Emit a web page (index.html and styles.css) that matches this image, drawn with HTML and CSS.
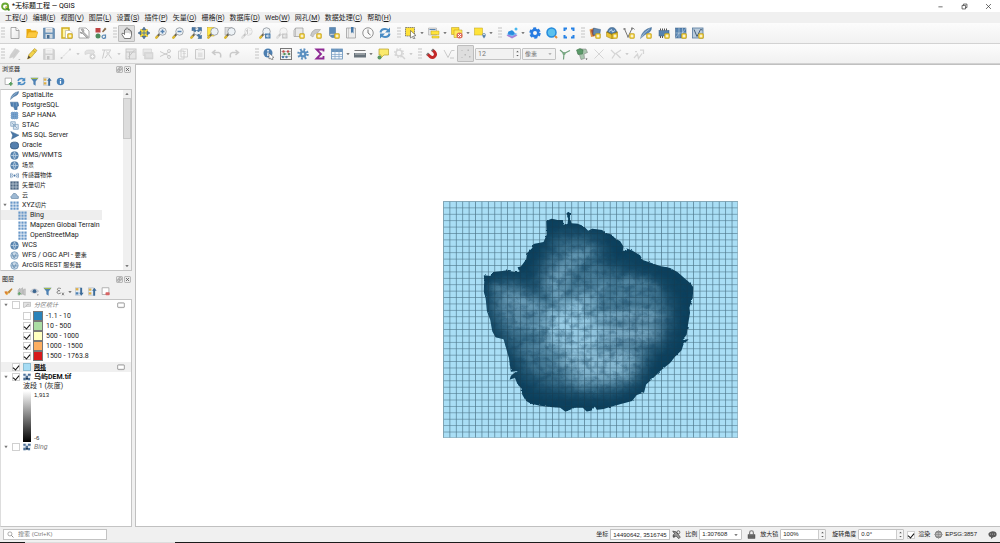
FILE: index.html
```html
<!DOCTYPE html>
<html lang="zh-CN">
<head>
<meta charset="utf-8">
<title>*无标题工程 — QGIS</title>
<link rel="stylesheet" href="styles.css">
</head>
<body>
<svg class="sprite" aria-hidden="true">
  <defs>
    <linearGradient id="pg" x1="0" y1="0" x2="1" y2="1"><stop offset="0" stop-color="#fff"/><stop offset="1" stop-color="#e8e8e8"/></linearGradient>
    <symbol id="plus" viewBox="0 0 24 24"><rect x="13" y="13" width="10" height="10" rx="2" fill="#e8c52c" stroke="#b8941a"/><path d="M18 15v6M15 18h6" stroke="#fff" stroke-width="2"/></symbol>
    <symbol id="new" viewBox="0 0 24 24"><path d="M4 1h10l6 6v16H4z" fill="url(#pg)" stroke="#888" stroke-width="1.4"/><path d="M14 1v6h6" fill="#fff" stroke="#888" stroke-width="1.4"/></symbol>
    <symbol id="open" viewBox="0 0 24 24"><path d="M1 21V4h8l2 3h10v14z" fill="#e9a90c"/><path d="M1 21l4-11h19l-4 11z" fill="#fcc93e" stroke="#dc9f10"/></symbol>
    <symbol id="save" viewBox="0 0 24 24"><path d="M1 2h20l2 2v19H1z" fill="#6b93b8" stroke="#476f98"/><rect x="5" y="2" width="14" height="9" fill="#eee"/><path d="M7 5h10M7 8h10" stroke="#aaa"/><rect x="5" y="14" width="14" height="9" fill="#cfd8df"/><rect x="8" y="16" width="5" height="7" fill="#486d92"/></symbol>
    <symbol id="layout" viewBox="0 0 24 24"><path d="M2 2h14v20H2z" fill="#fff4a5" stroke="#d0ad1f" stroke-width="3"/><path d="M9 7h9l4 4v12H9z" fill="#fff" stroke="#999"/><use href="#plus"/></symbol>
    <symbol id="layman" viewBox="0 0 24 24"><path d="M2 2h14l6 6v14H2z" fill="#fff" stroke="#888" stroke-width="1.4"/><path d="M6 5q3-2 5 0t0 5l9 9-2 3-9-9q-4 1-5-3l3 1 2-2z" fill="#bbb" stroke="#777"/></symbol>
    <symbol id="style" viewBox="0 0 24 24"><rect x="1" y="2" width="10" height="9" fill="#c04444"/><path d="M14 9l6-8 3 3-7 7z" fill="#8b6d4a"/><circle cx="6" cy="18" r="5" fill="#4c8a5b"/><path d="M21 15v8M21 20q-1 3-4 3-3-1-3-4 1-3 4-3l3 1" fill="none" stroke="#5c8ab5" stroke-width="2.4"/></symbol>
    <symbol id="hand" viewBox="0 0 24 24"><path d="M7 23l-5-8q-1-4 3-2l2 2V6q2-3 3 0V3q2-3 4 0v2q3-2 4 1v2q3-1 3 1v8l-2 6z" fill="#fff" stroke="#444" stroke-width="1.4"/><path d="M10 6v6M14 5v7M18 7v6" stroke="#555"/></symbol>
    <symbol id="pansel" viewBox="0 0 24 24"><path d="M5 5h14v14H5z" fill="#ffe033" stroke="#c5a111"/><path d="M12 0l4 6H8zM12 24l4-6H8zM0 12l6-4v8zM24 12l-6-4v8z" fill="#557ca3" stroke="#385a7c"/><path d="M12 7v10M7 12h10" stroke="#577da2" stroke-width="2"/></symbol>
    <symbol id="lens" viewBox="0 0 24 24"><path d="M9 14L2 22" stroke="#6c6553" stroke-width="4"/><path d="M6 18l-5 5" stroke="#e2bc2f" stroke-width="4"/><circle cx="15" cy="9" r="7.5" fill="#edf2f6" stroke="#92989e" stroke-width="1.7"/></symbol>
    <symbol id="zin" viewBox="0 0 24 24"><use href="#lens"/><path d="M15 5v8M11 9h8" stroke="#5682b1" stroke-width="3"/></symbol>
    <symbol id="zout" viewBox="0 0 24 24"><use href="#lens"/><path d="M11 9h8" stroke="#5682b1" stroke-width="3"/></symbol>
    <symbol id="zfull" viewBox="0 0 24 24"><use href="#lens"/><path d="M4 8V1h7L9 4l4 3-3 3-4-4zM23 8V1h-7l2 3-4 3 3 3 4-4zM23 16v7h-7l2-3-4-3 3-3 4 4z" fill="#4678a8" stroke="#365f87"/></symbol>
    <symbol id="zsel" viewBox="0 0 24 24"><rect x="1" y="1" width="13" height="17" fill="#ffe642" stroke="#cba60d"/><use href="#lens"/></symbol>
    <symbol id="zlay" viewBox="0 0 24 24"><rect x="2" y="1" width="14" height="15" fill="#ddd" stroke="#999"/><use href="#lens"/></symbol>
    <symbol id="znat" viewBox="0 0 24 24"><use href="#lens"/><path d="M11 7l2-2v9M18 7v1m0 4v1" stroke="#777" stroke-width="2"/></symbol>
    <symbol id="zlast" viewBox="0 0 24 24"><use href="#lens"/><rect x="12" y="13" width="11" height="10" fill="#4c7fad"/><path d="M21 18h-6m3-3l-3 3 3 3" fill="none" stroke="#fff" stroke-width="1.7"/></symbol>
    <symbol id="map3d" viewBox="0 0 24 24"><path d="M5 2h15v17H2V7l3-5z" fill="#e9e9e9" stroke="#999" stroke-width="1.4"/><path d="M5 2v17" stroke="#999"/><use href="#plus"/></symbol>
    <symbol id="map3" viewBox="0 0 24 24"><path d="M1 17q2-9 9-12h11l-6 7q-8 0-9 8z" fill="#c9c9c9" stroke="#999"/><use href="#plus"/></symbol>
    <symbol id="bookadd" viewBox="0 0 24 24"><path d="M3 1h12v20H8l-5-4z" fill="#5d8cb8" stroke="#466f96"/><path d="M3 17l2-3h10" fill="#ddd" stroke="#bbb"/><use href="#plus"/></symbol>
    <symbol id="book" viewBox="0 0 24 24"><path d="M3 2h18v20H3z" fill="#ececec" stroke="#999" stroke-width="1.5"/><path d="M7 2v20" stroke="#aaa"/><path d="M12 0h5v13l-3-3-2 3z" fill="#4678a8"/></symbol>
    <symbol id="clock" viewBox="0 0 24 24"><circle cx="12" cy="12" r="10.5" fill="#fafafa" stroke="#888" stroke-width="1.8"/><path d="M12 5v7l5 4" fill="none" stroke="#666" stroke-width="1.8"/></symbol>
    <symbol id="refresh" viewBox="0 0 24 24"><path d="M3 11q1-7 9-7 4 0 7 3M21 13q-1 7-9 7-4 0-7-3" fill="none" stroke="#4a8cc4" stroke-width="4"/><path d="M22 1v10H12zM2 23V13h10z" fill="#4a8cc4"/></symbol>
    <symbol id="selrect" viewBox="0 0 24 24"><rect x="1" y="1" width="18" height="17" fill="#ffe138" stroke="#666" stroke-width="1.5" stroke-dasharray="3 1"/><path d="M11 7l11 10-5 1 3 5-3 1-2-5-4 3z" fill="#fff" stroke="#333"/></symbol>
    <symbol id="selval" viewBox="0 0 24 24"><path d="M1 2h16v14H1z" fill="#e5e5e5" stroke="#999"/><path d="M3 5h12" stroke="#5682b1" stroke-width="2"/><path d="M6 8h16v7H6z" fill="#ffe43b" stroke="#bda11b"/><path d="M8 18h14v4H8z" fill="#ffe43b" stroke="#bda11b"/></symbol>
    <symbol id="desel" viewBox="0 0 24 24"><path d="M1 1h15v14H1z" fill="#ffdf35" stroke="#b49612"/><path d="M6 6h16v15H6z" fill="#ffe95f" stroke="#b49612"/><circle cx="17" cy="17" r="6" fill="#dd6a5f"/><path d="M14 14l6 6m0-6l-6 6" stroke="#fff" stroke-width="2"/></symbol>
    <symbol id="selloc" viewBox="0 0 24 24"><rect x="1" y="2" width="16" height="14" fill="#ffe339" stroke="#bca01b"/><path d="M20 23q-7-9 0-11 7 2 0 11" fill="#557fa9"/><circle cx="20" cy="15" r="1.600" fill="#fff"/></symbol>
    <symbol id="cloudlay" viewBox="0 0 24 24"><path d="M1 14l11-5 11 5-11 6z" fill="#77bcf2"/><path d="M1 17l11 6 11-6-4-2-7 4-7-4z" fill="#a583d8"/><path d="M5 15q-3-7 3-7 5-4 8 2 3 4-2 6z" fill="#278cdf"/><circle cx="20" cy="4" r="3" fill="#4ab8ef"/></symbol>
    <symbol id="bgear" viewBox="0 0 24 24"><circle cx="12" cy="12" r="6.5" fill="none" stroke="#277ce2" stroke-width="5"/><circle cx="12" cy="12" r="9.500" fill="none" stroke="#277ce2" stroke-width="4" stroke-dasharray="6 3.95"/></symbol>
    <symbol id="bsearch" viewBox="0 0 24 24"><circle cx="11" cy="11" r="9" fill="#5dc1ed" stroke="#258bdc" stroke-width="3"/><path d="M18 18l4 4" stroke="#e08a3c" stroke-width="4"/></symbol>
    <symbol id="bframe" viewBox="0 0 24 24"><path d="M3 8V3h5M16 3h5v5M21 16v5h-5M8 21H3v-5" fill="none" stroke="#2581e5" stroke-width="4"/></symbol>
    <symbol id="dsm" viewBox="0 0 24 24"><path d="M1 5l9-3 3 16-9 2z" fill="#e0923f"/><path d="M4 7l8-5 4 10-8 7z" fill="#9b4b3c"/><path d="M9 2l14 3-2 14-13-4z" fill="#6288ae" stroke="#3c5f84"/><use href="#plus"/></symbol>
    <symbol id="gpkg" viewBox="0 0 24 24"><path d="M1 10l11-6 11 6v9l-11 5-11-5z" fill="#e8c12f" stroke="#9c7d16"/><path d="M3 10q1-9 9-9t9 9l-9 4z" fill="#5480ad" stroke="#33567a"/><path d="M6 9l5-4 2 5 5-3" stroke="#c9dceb" fill="none" stroke-width="2"/><path d="M1 10l11 5 11-5M12 15v9" fill="none" stroke="#8b6d10" stroke-width="1.500"/><use href="#plus"/></symbol>
    <symbol id="vnew" viewBox="0 0 24 24"><path d="M3 4l7 16 8-17q4-1 5 2" fill="none" stroke="#666" stroke-width="1.8"/><g fill="#888"><rect x="1" y="2" width="4" height="4"/><rect x="8" y="17" width="4" height="4"/><rect x="16" y="1" width="4" height="4"/></g><use href="#plus"/></symbol>
    <symbol id="feather" viewBox="0 0 24 24"><path d="M1 23Q4 5 23 1q0 10-13 14z" fill="#5986b4" stroke="#3b6189"/><path d="M1 23Q7 11 19 4" stroke="#e5eef6" fill="none"/></symbol>
    <symbol id="feathernew" viewBox="0 0 24 24"><use href="#feather"/><use href="#plus"/></symbol>
    <symbol id="mem" viewBox="0 0 24 24"><rect x="2" y="7" width="20" height="11" fill="#5682ae" stroke="#365b82"/><path d="M5 3v4M9 3v4M13 3v4M17 3v4M5 18v4M9 18v4" stroke="#555" stroke-width="2"/><use href="#plus"/></symbol>
    <symbol id="mesh" viewBox="0 0 24 24"><rect x="1" y="2" width="21" height="20" fill="#5482b0" stroke="#365b82"/><path d="M1 12h21M8 2v20M15 2v20M8 12L1 22M15 12L22 2" stroke="#d4e0eb" fill="none"/><use href="#plus"/></symbol>
    <symbol id="vtile" viewBox="0 0 24 24"><rect x="1" y="2" width="21" height="20" fill="#b9cbdb" stroke="#55799e" stroke-width="1.6"/><path d="M4 5l6 14 7-14 4 1" fill="none" stroke="#425c76" stroke-width="2"/><use href="#plus"/></symbol>
    <symbol id="pencil" viewBox="0 0 24 24"><path d="M3 22l3-9L17 1l5 4L10 19z" fill="#f3d34b" stroke="#9d8018"/><path d="M3 22l2-7 4 4z" fill="#554936"/><path d="M14 5l5 4" stroke="#9d8018"/></symbol>
    <symbol id="pencils" viewBox="0 0 24 24"><path d="M1 20l2-6L12 1l5 3L8 18zM8 21l2-6L17 3l4 3-10 13z" fill="#888" stroke="#777"/><path d="M18 22h5l-2 2z" fill="#333"/></symbol>
    <symbol id="line" viewBox="0 0 24 24"><path d="M3 20L20 3" stroke="#777" stroke-width="1.6" stroke-dasharray="4 2"/><circle cx="3" cy="20" r="2" fill="#777"/><circle cx="20" cy="3" r="2" fill="#777"/></symbol>
    <symbol id="poly" viewBox="0 0 24 24"><path d="M2 13q-2-9 7-9h10q5 6-2 9l-8-2z" fill="#bbb" stroke="#777"/><circle cx="17" cy="17" r="6" fill="#999"/><path d="M14 17h6M17 14v6" stroke="#fff" stroke-width="2"/></symbol>
    <symbol id="vertex" viewBox="0 0 24 24"><path d="M2 4h18M7 4L3 21M19 5L8 20M11 7l10 14" stroke="#777" fill="none" stroke-width="2"/><circle cx="14" cy="11" r="3" fill="#aaa"/></symbol>
    <symbol id="form" viewBox="0 0 24 24"><rect x="2" y="2" width="20" height="20" fill="#ccc" stroke="#777" stroke-width="2"/><path d="M2 8h19M9 8v14M7 18L19 4" stroke="#666" stroke-width="2"/></symbol>
    <symbol id="trash" viewBox="0 0 24 24"><path d="M2 2h17v13H2z" fill="#ccc" stroke="#777"/><path d="M5 9h17v13H5z" fill="#c99" stroke="#a77"/><path d="M10 12v7m4-7v7m4-7v7" stroke="#fff"/></symbol>
    <symbol id="cut" viewBox="0 0 24 24"><path d="M2 7l19 9M2 17l19-9" stroke="#777" stroke-width="2"/><circle cx="20" cy="6" r="3" fill="none" stroke="#777" stroke-width="2"/><circle cx="20" cy="18" r="3" fill="none" stroke="#777" stroke-width="2"/></symbol>
    <symbol id="copy" viewBox="0 0 24 24"><path d="M3 6h11v16H3zM8 2h13v16H8z" fill="#f5f5f5" stroke="#777" stroke-width="1.6"/><path d="M11 7h7M11 11h7" stroke="#777"/></symbol>
    <symbol id="paste" viewBox="0 0 24 24"><path d="M3 3h18v19H3z" fill="#eee" stroke="#777" stroke-width="2"/><path d="M8 1h8v4H8zM8 9h9v9H8z" fill="#bbb"/></symbol>
    <symbol id="undo" viewBox="0 0 24 24"><path d="M9 4L3 9l6 5M4 9h11q6 1 4 10" fill="none" stroke="#777" stroke-width="3"/></symbol>
    <symbol id="redo" viewBox="0 0 24 24"><path d="M15 4l6 5-6 5M20 9H9q-6 1-4 10" fill="none" stroke="#777" stroke-width="3"/></symbol>
    <symbol id="ident" viewBox="0 0 24 24"><circle cx="10" cy="10" r="9" fill="#4d7fb0"/><path d="M10 4v3M10 9v7" stroke="#fff" stroke-width="3"/><path d="M12 10l10 9-4 1 2 4-3 0-2-4-3 2z" fill="#fff" stroke="#444"/></symbol>
    <symbol id="calc" viewBox="0 0 24 24"><rect x="1" y="1" width="22" height="22" fill="#f4f4f4" stroke="#777" stroke-width="2"/><path d="M1 7h22M1 12h22M1 17h22" stroke="#999"/><g fill="#c14d4d"><circle cx="7" cy="7" r="2.400"/><circle cx="16" cy="7" r="2.400"/></g><g fill="#55935d"><circle cx="9" cy="12" r="2.400"/><circle cx="18" cy="12" r="2.400"/></g><g fill="#4e7faf"><circle cx="6" cy="18" r="2.400"/><circle cx="13" cy="18" r="2.400"/></g></symbol>
    <symbol id="gear" viewBox="0 0 24 24"><circle cx="12" cy="12" r="7" fill="#5a8fc0"/><circle cx="12" cy="12" r="9" fill="none" stroke="#5a8fc0" stroke-width="5" stroke-dasharray="3.500 3.56"/><circle cx="12" cy="12" r="2.4" fill="#dce9f4"/></symbol>
    <symbol id="sigma" viewBox="0 0 24 24"><path d="M19 7V3H5l9 9-9 9h14v-5" fill="none" stroke="#8d2893" stroke-width="3.600"/></symbol>
    <symbol id="table" viewBox="0 0 24 24"><rect x="1" y="2" width="22" height="20" fill="#f2f6fa" stroke="#5e89b3" stroke-width="1.5"/><path d="M1 2h22v6H1z" fill="#6994be"/><path d="M1 13h22M1 17h22M8 2v20M16 2v20" stroke="#7da2c5" stroke-width="1.4"/></symbol>
    <symbol id="ruler" viewBox="0 0 24 24"><path d="M1 5h22" stroke="#777" stroke-width="2"/><rect x="0" y="10" width="24" height="9" fill="#68737b"/><path d="M4 10v4m4-4v4m4-4v4m4-4v4m4-4v4" stroke="#ddd" stroke-width="1.5"/></symbol>
    <symbol id="tip" viewBox="0 0 24 24"><path d="M4 2h19v12H14l-6 6v-6H4z" fill="#fbea6d" stroke="#b7a02a" stroke-width="1.4"/><circle cx="5" cy="19" r="4" fill="#5a9664"/></symbol>
    <symbol id="ggear" viewBox="0 0 24 24"><circle cx="10" cy="10" r="6" fill="none" stroke="#999" stroke-width="3"/><circle cx="10" cy="10" r="8.5" fill="none" stroke="#999" stroke-width="3" stroke-dasharray="3.3 3.37"/><path d="M15 15l7 7" stroke="#999" stroke-width="3"/></symbol>
    <symbol id="magnet" viewBox="0 0 24 24"><path d="M3 12l5 5q5 4 9 0t0-9l-4-4" fill="none" stroke="#c32929" stroke-width="6"/><path d="M1 14l4-4M11 6l4-4" stroke="#777" stroke-width="3"/></symbol>
    <symbol id="vgray" viewBox="0 0 24 24"><path d="M2 4l8 15L17 5h6" fill="none" stroke="#777" stroke-width="2"/><path d="M14 20h8" stroke="#777" stroke-width="2"/></symbol>
    <symbol id="snap" viewBox="0 0 24 24"><g fill="#777"><rect x="3" y="4" width="2" height="2"/><rect x="15" y="3" width="3" height="3"/><rect x="9" y="12" width="3" height="3"/><rect x="3" y="18" width="2" height="2"/><rect x="18" y="16" width="3" height="3"/></g></symbol>
    <symbol id="topo" viewBox="0 0 24 24"><path d="M2 4l8 7 12-6M10 11l-1 12" fill="none" stroke="#6fa07b" stroke-width="2.4"/><circle cx="10" cy="11" r="3" fill="#79a882"/></symbol>
    <symbol id="overlap" viewBox="0 0 24 24"><path d="M9 2h11l3 7-7 3 1 9-7 2-3-9-4-4z" fill="#a9c6ae" stroke="#777"/><path d="M1 4l7-3 6 3-1 8-9 1z" fill="#5b9a69" stroke="#3c6e47"/><path d="M19 21h4l-2 3z" fill="#444"/></symbol>
    <symbol id="cross" viewBox="0 0 24 24"><path d="M3 3l18 18M21 3L3 21" stroke="#999" stroke-width="2"/></symbol>
    <symbol id="avoid" viewBox="0 0 24 24"><path d="M2 4l8 8 12-8M10 12l-6 9M12 11l9 9" fill="none" stroke="#999" stroke-width="2.5"/></symbol>
    <symbol id="split" viewBox="0 0 24 24"><path d="M2 20l7-8 2 9 7-10M14 4h7v8M4 7h4" fill="none" stroke="#999" stroke-width="2.5"/></symbol>
    <symbol id="addlay" viewBox="0 0 24 24"><path d="M3 3h17v17H3z" fill="#fff" stroke="#888" stroke-width="1.6"/><path d="M18 13v10M13 18h10" stroke="#57a060" stroke-width="4"/></symbol>
    <symbol id="funnel" viewBox="0 0 24 24"><path d="M1 2h22l-8 10v11l-6-4v-7z" fill="#4f82b3"/><path d="M3 4h18" stroke="#a3b94e" stroke-width="3"/></symbol>
    <symbol id="collapse" viewBox="0 0 24 24"><path d="M1 2h14v20H1z" fill="#e5edf5" stroke="#89a"/><rect x="2" y="4" width="7" height="6" fill="#e0ae45"/><rect x="2" y="14" width="7" height="6" fill="#e0ae45"/><path d="M14 23V10h-3l6-8 6 8h-4v13z" fill="#3d6c9a"/></symbol>
    <symbol id="expand" viewBox="0 0 24 24"><path d="M1 2h14v20H1z" fill="#e5edf5" stroke="#89a"/><rect x="2" y="3" width="7" height="6" fill="#e0ae45"/><rect x="2" y="14" width="7" height="6" fill="#4f82b3"/><path d="M14 2v13h-3l6 8 6-8h-4V2z" fill="#3d6c9a"/></symbol>
    <symbol id="info" viewBox="0 0 24 24"><circle cx="12" cy="12" r="10" fill="#4a82b9"/><path d="M12 5v3M12 10v8" stroke="#fff" stroke-width="3.4"/></symbol>
    <symbol id="pgsql" viewBox="0 0 24 24"><path d="M1 3h20l3 9-5 4v7l-6 1-3-8-7-2z" fill="#4f7fb0" stroke="#2f5a86"/><path d="M9 4v12M17 5v9" stroke="#b4cbe0"/></symbol>
    <symbol id="hana" viewBox="0 0 24 24"><rect x="3" y="3" width="18" height="18" fill="#5d8fc2"/><path d="M1 7h22M1 12h22M1 17h22M7 1v22M12 1v22M17 1v22" stroke="#86aad0" stroke-width="1.4"/></symbol>
    <symbol id="stac" viewBox="0 0 24 24"><path d="M2 2h12v12H2zM9 9h13v13H9z" fill="#dbe6f0" stroke="#7e9fbe" stroke-width="2"/><path d="M5 5l14 14" stroke="#7e9fbe" stroke-width="2"/></symbol>
    <symbol id="mssql" viewBox="0 0 24 24"><path d="M2 1l22 10-20 11 3-11z" fill="#4b78a7" stroke="#315a83"/></symbol>
    <symbol id="oracle" viewBox="0 0 24 24"><rect x="1" y="3" width="22" height="18" rx="8" fill="#547fae" stroke="#2e5379" stroke-width="2"/></symbol>
    <symbol id="globe" viewBox="0 0 24 24"><circle cx="12" cy="12" r="10.5" fill="#5d88b3" stroke="#40698f"/><path d="M2 12h20M12 2q-7 10 0 20M12 2q7 10 0 20" fill="none" stroke="#dae6f1" stroke-width="1.5"/></symbol>
    <symbol id="lglobe" viewBox="0 0 24 24"><circle cx="12" cy="12" r="10" fill="#c9d9e8" stroke="#7297b9" stroke-width="2"/><path d="M5 5l6 14 6-13M3 13h18" fill="none" stroke="#6289ae" stroke-width="2"/></symbol>
    <symbol id="sensor" viewBox="0 0 24 24"><circle cx="12" cy="12" r="3" fill="#4b78a7"/><path d="M7 7q-4 5 0 10M17 7q4 5 0 10M3 5q-4 7 0 14M21 5q4 7 0 14" fill="none" stroke="#4b78a7" stroke-width="2"/></symbol>
    <symbol id="grid" viewBox="0 0 24 24"><path d="M1 1h6v6H1zM9 1h6v6H9zM17 1h6v6h-6zM1 9h6v6H1zM9 9h6v6H9zM17 9h6v6h-6zM1 17h6v6H1zM9 17h6v6H9zM17 17h6v6h-6z" fill="#6897c8"/></symbol>
    <symbol id="dgrid" viewBox="0 0 24 24"><rect x="1" y="1" width="22" height="22" fill="#4d6783"/><path d="M1 8h22M1 16h22M8 1v22M16 1v22" stroke="#dce5ed" stroke-width="1.6"/></symbol>
    <symbol id="cloud" viewBox="0 0 24 24"><path d="M4 20q-5-5 2-9 2-7 9-4 3 1 3 5 7 1 4 8z" fill="#9eb9d3" stroke="#5e7fa0" stroke-width="1.6"/></symbol>
    <symbol id="brush" viewBox="0 0 24 24"><path d="M1 12l7-1 5 5-5 6q-6-2-7-10z" fill="#e9a83d"/><path d="M9 13L20 3l3 2-9 12z" fill="#c08a3a"/><path d="M2 13l4-1 2 7" fill="#d0603b"/></symbol>
    <symbol id="addgrp" viewBox="0 0 24 24"><path d="M3 22V8l5-5v15zM10 20V6l5-4v17zM17 20V7l5-2v17z" fill="#ccc" stroke="#888"/><path d="M6 13v9M2 18h9" stroke="#5da466" stroke-width="3"/></symbol>
    <symbol id="eye" viewBox="0 0 24 24"><path d="M1 11q11-12 22 0-11 11-22 0z" fill="#d2dae2" stroke="#889"/><circle cx="12" cy="11" r="5" fill="#3d668f"/><path d="M19 20h4l-2 3z" fill="#444"/></symbol>
    <symbol id="eps" viewBox="0 0 24 24"><path d="M13 4Q3 1 4 7q1 3 6 3-9 0-7 6 3 4 10 0M16 15l5 7M21 15l-5 7" fill="none" stroke="#666" stroke-width="2"/></symbol>
    <symbol id="remove" viewBox="0 0 24 24"><path d="M3 2h18v18H3z" fill="#fff" stroke="#888" stroke-width="1.6"/><rect x="12" y="14" width="11" height="8" rx="2" fill="#d86564"/></symbol>
    <symbol id="group" viewBox="0 0 24 24"><path d="M1 19V4h22v12H9l-4 3z" fill="#e2e2e2" stroke="#999" stroke-width="1.500"/><path d="M9 16l4-6h6" fill="none" stroke="#999" stroke-width="1.500"/></symbol>
    <symbol id="raster" viewBox="0 0 24 24"><rect x="1" y="2" width="22" height="20" fill="#dfe7ee"/><path d="M1 2h7v6H1zM8 8h7v6H8zM15 2h8v6h-8zM1 14h7v8H1zM15 15h6v7h-6z" fill="#4b6f98"/><path d="M8 14h7v6H8z" fill="#193450"/></symbol>
    <symbol id="chip" viewBox="0 0 24 24"><rect x="2" y="6" width="20" height="13" rx="1" fill="#fff" stroke="#777" stroke-width="2"/><path d="M6 3v3m4-3v3m4-3v3m4-3v3M6 19v3m4-3v3m4-3v3m4-3v3" stroke="#999"/></symbol>
    <symbol id="extent" viewBox="0 0 24 24"><path d="M2 3l9 2 5 6 6 8-4 4-7-7-7 3-1-6 4-3z" fill="#999" stroke="#444" stroke-width="2"/><circle cx="17" cy="6" r="4" fill="none" stroke="#444" stroke-width="2"/><circle cx="5" cy="17" r="3" fill="#555"/></symbol>
    <symbol id="lock" viewBox="0 0 24 24"><path d="M7 12V7q0-5 5-5t5 5v5" fill="none" stroke="#777" stroke-width="3"/><rect x="2" y="11" width="20" height="12" rx="1" fill="#5a5a5a"/><path d="M5 15h14M5 19h14" stroke="#888"/></symbol>
    <symbol id="crs" viewBox="0 0 24 24"><circle cx="12" cy="12" r="9" fill="#ddd" stroke="#666" stroke-width="2"/><path d="M1 12h22M12 1v22M5 7h14M5 17h14M8 3v18M16 3v18" stroke="#777" stroke-width="1.5"/></symbol>
    <symbol id="msg" viewBox="0 0 24 24"><path d="M12 3q11 0 11 8t-9 8l-6 5v-5q-7-2-7-8t11-8z" fill="#5a5a5a"/><path d="M6 11h2m3 0h2m3 0h2" stroke="#eee" stroke-width="2"/></symbol>
    <symbol id="find" viewBox="0 0 24 24"><circle cx="10" cy="10" r="7" fill="none" stroke="#777" stroke-width="2"/><path d="M15 15l7 7" stroke="#777" stroke-width="3"/></symbol>
    <symbol id="dock" viewBox="0 0 24 24"><rect x="2" y="2" width="20" height="20" rx="2" fill="none" stroke="#888" stroke-width="2"/><path d="M6 11h7v7H6zM10 11V6h8v8h-5" fill="none" stroke="#777" stroke-width="2"/></symbol>
    <symbol id="shut" viewBox="0 0 24 24"><rect x="2" y="2" width="20" height="20" rx="2" fill="none" stroke="#888" stroke-width="2"/><path d="M7 7l10 10M17 7L7 17" stroke="#555" stroke-width="3"/></symbol>
    <symbol id="tri" viewBox="0 0 24 24"><path d="M2 7h20L12 18z" fill="#555"/></symbol>
    <symbol id="triup" viewBox="0 0 24 24"><path d="M2 17h20L12 6z" fill="#555"/></symbol>
    <symbol id="twist" viewBox="0 0 24 24"><path d="M2 5h20L12 19z" fill="#777"/></symbol>
  </defs>
</svg>

<header class="titlebar">
  <svg class="logo" viewBox="0 0 24 24"><circle cx="11" cy="12" r="8" fill="none" stroke="#69a832" stroke-width="5"/><path d="M12 12h5l6 7v4h-4l-7-7z" fill="#4b8f2a"/><path d="M12 12h5v4h-4z" fill="#e9c63c"/></svg>
  <h1>*无标题工程 — QGIS</h1>
  <div class="winbtns">
    <button aria-label="最小化"><svg viewBox="0 0 10 10"><path d="M2 5.500h6" stroke="#333"/></svg></button>
    <button aria-label="还原"><svg viewBox="0 0 10 10"><path d="M1.500 3.500h5v5h-5zM3.500 3.500v-2h5v5h-2" fill="none" stroke="#333"/></svg></button>
    <button aria-label="关闭"><svg viewBox="0 0 10 10"><path d="M1.500 1.500l7 7m0-7l-7 7" stroke="#333"/></svg></button>
  </div>
</header>

<nav class="menubar">
  <button>工程(<u>J</u>)</button><button>编辑(<u>E</u>)</button><button>视图(<u>V</u>)</button><button>图层(<u>L</u>)</button><button>设置(<u>S</u>)</button><button>插件(<u>P</u>)</button><button>矢量(<u>O</u>)</button><button>栅格(<u>R</u>)</button><button>数据库(<u>D</u>)</button><button>Web(<u>W</u>)</button><button>网孔(<u>M</u>)</button><button>数据处理(<u>C</u>)</button><button>帮助(<u>H</u>)</button>
</nav>

<div class="toolbar" role="toolbar" aria-label="工程与导航">
  <i class="grip"></i>
  <div class="group project">
    <button aria-label="新建工程"><svg><use href="#new"/></svg></button><button aria-label="打开工程"><svg><use href="#open"/></svg></button><button aria-label="保存工程"><svg><use href="#save"/></svg></button><button aria-label="新建打印布局"><svg><use href="#layout"/></svg></button><button aria-label="布局管理器"><svg><use href="#layman"/></svg></button><button aria-label="样式管理器"><svg><use href="#style"/></svg></button>
  </div>
  <i class="grip"></i>
  <div class="group navigate">
    <button class="active" aria-label="平移地图"><svg><use href="#hand"/></svg></button><button aria-label="平移至所选"><svg><use href="#pansel"/></svg></button><button aria-label="放大"><svg><use href="#zin"/></svg></button><button aria-label="缩小"><svg><use href="#zout"/></svg></button><button aria-label="全图"><svg><use href="#zfull"/></svg></button><button aria-label="缩放至所选"><svg><use href="#zsel"/></svg></button><button aria-label="缩放至图层"><svg><use href="#zlay"/></svg></button><button disabled aria-label="原始分辨率"><svg><use href="#znat"/></svg></button><button aria-label="上一视图"><svg><use href="#zlast"/></svg></button><button disabled aria-label="下一视图"><svg><use href="#zlast"/></svg></button><button aria-label="新建地图视图"><svg><use href="#map3d"/></svg></button><button aria-label="新建三维视图"><svg><use href="#map3"/></svg></button><button aria-label="新建书签"><svg><use href="#bookadd"/></svg></button><button aria-label="显示书签"><svg><use href="#book"/></svg></button><button aria-label="时态控制器"><svg><use href="#clock"/></svg></button><button aria-label="刷新"><svg><use href="#refresh"/></svg></button>
  </div>
  <i class="grip"></i>
  <div class="group">
    <button aria-label="选择要素"><svg><use href="#selrect"/></svg></button><button class="drop" aria-label="选择菜单"><svg><use href="#tri"/></svg></button><button aria-label="按值选择"><svg><use href="#selval"/></svg></button><button class="drop" aria-label="按值菜单"><svg><use href="#tri"/></svg></button><button aria-label="取消选择"><svg><use href="#desel"/></svg></button><button class="drop" aria-label="取消菜单"><svg><use href="#tri"/></svg></button><button aria-label="按位置选择"><svg><use href="#selloc"/></svg></button><button class="drop" aria-label="位置菜单"><svg><use href="#tri"/></svg></button>
  </div>
  <i class="grip wide"></i>
  <div class="group">
    <button aria-label="在线底图"><svg><use href="#cloudlay"/></svg></button><button class="drop" aria-label="底图菜单"><svg><use href="#tri"/></svg></button><button aria-label="插件设置"><svg><use href="#bgear"/></svg></button><button aria-label="搜索地点"><svg><use href="#bsearch"/></svg></button><button aria-label="范围"><svg><use href="#bframe"/></svg></button>
  </div>
  <i class="grip wide"></i>
  <div class="group sources">
    <button aria-label="数据源管理器"><svg><use href="#dsm"/></svg></button><button aria-label="新建GeoPackage"><svg><use href="#gpkg"/></svg></button><button aria-label="新建Shapefile"><svg><use href="#vnew"/></svg></button><button aria-label="新建SpatiaLite"><svg><use href="#feathernew"/></svg></button><button aria-label="新建临时图层"><svg><use href="#mem"/></svg></button><button aria-label="新建网格图层"><svg><use href="#mesh"/></svg></button><button aria-label="新建虚拟图层"><svg><use href="#vtile"/></svg></button>
  </div>
</div>

<div class="toolbar lower" role="toolbar" aria-label="编辑与属性">
  <i class="grip"></i>
  <div class="group edit">
    <button disabled aria-label="当前编辑"><svg><use href="#pencils"/></svg></button><button aria-label="切换编辑"><svg><use href="#pencil"/></svg></button><button disabled aria-label="保存编辑"><svg><use href="#save"/></svg></button><button disabled aria-label="数字化"><svg><use href="#line"/></svg></button><button class="drop" disabled aria-label="数字化菜单"><svg><use href="#tri"/></svg></button><button disabled aria-label="添加要素"><svg><use href="#poly"/></svg></button><button disabled aria-label="节点工具"><svg><use href="#vertex"/></svg></button><button class="drop" disabled aria-label="节点菜单"><svg><use href="#tri"/></svg></button><button disabled aria-label="修改属性"><svg><use href="#form"/></svg></button><button disabled aria-label="删除所选"><svg><use href="#trash"/></svg></button><button disabled aria-label="剪切"><svg><use href="#cut"/></svg></button><button disabled aria-label="复制"><svg><use href="#copy"/></svg></button><button disabled aria-label="粘贴"><svg><use href="#paste"/></svg></button><button disabled aria-label="撤销"><svg><use href="#undo"/></svg></button><button disabled aria-label="重做"><svg><use href="#redo"/></svg></button>
  </div>
  <i class="grip far"></i>
  <div class="group">
    <button aria-label="识别要素"><svg><use href="#ident"/></svg></button><button aria-label="字段计算器"><svg><use href="#calc"/></svg></button><button aria-label="工具箱"><svg><use href="#gear"/></svg></button><button aria-label="统计汇总"><svg><use href="#sigma"/></svg></button><button aria-label="属性表"><svg><use href="#table"/></svg></button><button class="drop" aria-label="属性表菜单"><svg><use href="#tri"/></svg></button><button aria-label="测量"><svg><use href="#ruler"/></svg></button><button class="drop" aria-label="测量菜单"><svg><use href="#tri"/></svg></button><button aria-label="地图提示"><svg><use href="#tip"/></svg></button><button disabled aria-label="要素动作"><svg><use href="#ggear"/></svg></button><button class="drop" disabled aria-label="动作菜单"><svg><use href="#tri"/></svg></button>
  </div>
  <i class="grip wide"></i>
  <div class="group snapping">
    <button aria-label="启用捕捉"><svg><use href="#magnet"/></svg></button><button disabled aria-label="当前图层"><svg><use href="#vgray"/></svg></button><button class="active" disabled aria-label="顶点捕捉"><svg><use href="#snap"/></svg></button>
    <div class="spin tol"><input value="12" aria-label="捕捉容差" disabled><span class="updown"><button aria-label="增加"><svg><use href="#triup"/></svg></button><button aria-label="减少"><svg><use href="#tri"/></svg></button></span></div>
    <div class="combo unit"><select aria-label="容差单位" disabled><option>像素</option></select><svg><use href="#tri"/></svg></div>
    <button aria-label="拓扑编辑"><svg><use href="#topo"/></svg></button><button aria-label="允许重叠"><svg><use href="#overlap"/></svg></button><button disabled aria-label="交叉捕捉"><svg><use href="#cross"/></svg></button><button disabled aria-label="追踪"><svg><use href="#avoid"/></svg></button><button class="drop" disabled aria-label="追踪菜单"><svg><use href="#tri"/></svg></button><button disabled aria-label="自捕捉"><svg><use href="#split"/></svg></button>
  </div>
</div>

<main class="workspace">
  <aside class="docks">
    <section class="dock">
      <header><h2>浏览器</h2><button aria-label="浮动浏览器"><svg><use href="#dock"/></svg></button><button aria-label="关闭浏览器"><svg><use href="#shut"/></svg></button></header>
      <div class="docktools">
        <button aria-label="添加所选图层"><svg><use href="#addlay"/></svg></button><button aria-label="刷新浏览器"><svg><use href="#refresh"/></svg></button><button aria-label="筛选"><svg><use href="#funnel"/></svg></button><button aria-label="全部折叠"><svg><use href="#collapse"/></svg></button><button aria-label="属性"><svg><use href="#info"/></svg></button>
      </div>
      <div class="treebox">
        <ul class="tree">
          <li><svg><use href="#feather"/></svg>SpatiaLite</li>
          <li><svg><use href="#pgsql"/></svg>PostgreSQL</li>
          <li><svg><use href="#hana"/></svg>SAP HANA</li>
          <li><svg><use href="#stac"/></svg>STAC</li>
          <li><svg><use href="#mssql"/></svg>MS SQL Server</li>
          <li><svg><use href="#oracle"/></svg>Oracle</li>
          <li><svg><use href="#globe"/></svg>WMS/WMTS</li>
          <li class="cn"><svg><use href="#globe"/></svg>场景</li>
          <li class="cn"><svg><use href="#sensor"/></svg>传感器物体</li>
          <li class="cn"><svg><use href="#dgrid"/></svg>矢量切片</li>
          <li class="cn"><svg><use href="#cloud"/></svg>云</li>
          <li class="parent"><svg class="twist"><use href="#twist"/></svg><svg><use href="#grid"/></svg><span>XYZ<span class="cn">切片</span></span></li>
          <li class="child selected"><svg><use href="#grid"/></svg>Bing</li>
          <li class="child"><svg><use href="#grid"/></svg>Mapzen Global Terrain</li>
          <li class="child"><svg><use href="#grid"/></svg>OpenStreetMap</li>
          <li><svg><use href="#globe"/></svg>WCS</li>
          <li><svg><use href="#lglobe"/></svg><span>WFS / OGC API - <span class="cn">要素</span></span></li>
          <li><svg><use href="#lglobe"/></svg><span>ArcGIS REST <span class="cn">服务器</span></span></li>
        </ul>
        <div class="scroll"><button aria-label="向上滚动"><svg><use href="#triup"/></svg></button><span class="thumb"></span><button aria-label="向下滚动"><svg><use href="#tri"/></svg></button></div>
      </div>
    </section>
    <section class="dock grow">
      <header><h2>图层</h2><button aria-label="浮动图层"><svg><use href="#dock"/></svg></button><button aria-label="关闭图层"><svg><use href="#shut"/></svg></button></header>
      <div class="docktools">
        <button aria-label="图层样式"><svg><use href="#brush"/></svg></button><button aria-label="添加组"><svg><use href="#addgrp"/></svg></button><button aria-label="管理可见性"><svg><use href="#eye"/></svg></button><button aria-label="筛选图例"><svg><use href="#funnel"/></svg></button><button aria-label="按表达式筛选"><svg><use href="#eps"/></svg></button><button class="drop" aria-label="表达式菜单"><svg><use href="#tri"/></svg></button><button aria-label="全部展开"><svg><use href="#expand"/></svg></button><button aria-label="折叠图层"><svg><use href="#collapse"/></svg></button><button aria-label="移除图层"><svg><use href="#remove"/></svg></button>
      </div>
      <div class="layers">
        <div class="layer"><svg class="twist"><use href="#twist"/></svg><label><input type="checkbox"><svg><use href="#group"/></svg><em class="cn">分区统计</em></label><svg class="chip"><use href="#chip"/></svg></div>
        <div class="legend">
          <label><input type="checkbox"><i class="sw c1"></i>-1.1 - 10</label>
          <label><input type="checkbox" checked><i class="sw c2"></i>10 - 500</label>
          <label><input type="checkbox" checked><i class="sw c3"></i>500 - 1000</label>
          <label><input type="checkbox" checked><i class="sw c4"></i>1000 - 1500</label>
          <label><input type="checkbox" checked><i class="sw c5"></i>1500 - 1763.8</label>
        </div>
        <div class="layer current"><span class="twist"></span><label><input type="checkbox" checked><i class="sw sky"></i><b class="cn"><u>网格</u></b></label><svg class="chip"><use href="#chip"/></svg></div>
        <div class="layer"><svg class="twist"><use href="#twist"/></svg><label><input type="checkbox" checked><svg><use href="#raster"/></svg><b>乌屿DEM.tif</b></label></div>
        <div class="band">波段 1 (灰度)</div>
        <div class="ramp"><i></i><div><span>1,913</span><span>-6</span></div></div>
        <div class="layer"><svg class="twist"><use href="#twist"/></svg><label><input type="checkbox"><svg><use href="#raster"/></svg><em>Bing</em></label></div>
      </div>
    </section>
  </aside>
  <div class="canvas">
    <svg class="map" viewBox="8 9 886 712" preserveAspectRatio="none" role="img" aria-label="网格与高程栅格">
      <defs>
        <clipPath id="isle"><path d="M318 69L334 62 352 66 368 66 370 80 382 78 384 62 378 48 384 41 390 46 389 60 394 76 412 77 430 84 444 98 456 92 486 96 496 106 514 110 524 120 540 130 550 146 548 160 560 152 576 158 600 172 608 186 630 194 660 204 690 210 712 222 730 238 750 255 760 268 758 300 748 330 750 345 744 380 740 410 728 426 746 424 730 440 724 458 704 478 690 496 662 518 640 540 618 560 612 584 590 592 576 610 545 618 515 626 490 634 470 636 464 626 456 638 440 642 428 630 404 630 376 642 360 630 330 628 300 624 272 618 256 608 246 590 244 572 232 560 224 540 208 546 212 534 230 520 212 522 206 480 200 460 190 424 166 418 156 400 150 366 140 340 136 300 130 280 132 250 130 232 150 234 160 222 200 218 222 222 238 222 232 208 242 206 258 184 262 164 276 150 280 138 310 132 320 110z"/></clipPath>
        <pattern id="cells" x="8" y="9" width="19.260" height="19.240" patternUnits="userSpaceOnUse"><path d="M0 0V19.240" stroke="#16394b" stroke-width="4.600" stroke-opacity=".9"/><path d="M0 0H19.260" stroke="#16394b" stroke-width="4.600" stroke-opacity=".75"/></pattern>
        <filter id="b30" x="-50%" y="-50%" width="200%" height="200%" color-interpolation-filters="sRGB"><feGaussianBlur stdDeviation="26"/></filter>
        <filter id="b8" x="-20%" y="-20%" width="140%" height="140%" color-interpolation-filters="sRGB"><feGaussianBlur stdDeviation="10"/></filter>
        <filter id="rough" x="0" y="0" width="100%" height="100%" color-interpolation-filters="sRGB"><feTurbulence type="fractalNoise" baseFrequency=".04 .05" numOctaves="4" seed="7"/><feColorMatrix values="0 0 0 0 .05  0 0 0 0 .24  0 0 0 0 .36  3 0 0 0 -1.250"/></filter>
        <filter id="ragged" x="-5%" y="-5%" width="110%" height="110%" color-interpolation-filters="sRGB"><feTurbulence type="fractalNoise" baseFrequency=".08" numOctaves="2" seed="3" result="n"/><feDisplacementMap in="SourceGraphic" in2="n" scale="7" xChannelSelector="R" yChannelSelector="G"/></filter>
      </defs>
      <rect x="8" y="9" width="886" height="712" fill="#a9def5"/>
      <g filter="url(#ragged)"><g clip-path="url(#isle)">
        <rect x="100" y="30" width="680" height="630" fill="#0c415e"/>
        <g filter="url(#b30)">
          <path d="M155 275L215 245 290 300 330 200 335 130 400 115 480 140 480 210 560 225 650 265 690 330 670 410 600 490 580 550 480 580 320 565 255 520 220 440 170 370z" fill="#4a7f9b"/>
          <ellipse cx="405" cy="385" rx="95" ry="85" fill="#9dd1ea"/>
          <ellipse cx="480" cy="500" rx="120" ry="55" fill="#8abcd5"/>
          <ellipse cx="580" cy="390" rx="95" ry="60" fill="#75a5bf"/>
          <ellipse cx="230" cy="320" rx="65" ry="30" fill="#6fa0bb"/>
          <ellipse cx="350" cy="240" rx="45" ry="50" fill="#6496b1"/>
        </g>
        <g filter="url(#b8)" fill="none" stroke-linecap="round">
          <path d="M160 265q70 50 130 60t100 35M325 265q60-70 100-90M360 165q60 20 90-10M390 350q70-80 150-95t110 20M400 370q130-15 260-35M410 400q100 20 220-10M410 420q70 90 150 120M390 400q-80 10-180-35M400 430q-80 60-130 60M430 430q20 90-10 140M340 240q0 60 60 115" stroke="#86b9d4" stroke-width="15" opacity=".5"/>
          <path d="M240 230q50 60 120 105M380 310q30-90 80-125l130 10M440 345q120-45 230-10M460 375q130 0 230 15M370 470q-70 20-170 35M390 520q-40 20-120 20M470 450q100-10 190 0M310 150q40 20 70 10M230 420q60 0 90-20M500 290q40-50 80-110" stroke="#134764" stroke-width="12" opacity=".6"/>
        </g>
        <rect x="100" y="30" width="680" height="630" filter="url(#rough)" opacity=".35"/>
      </g></g>
      <rect x="8" y="9" width="886" height="712" fill="url(#cells)" opacity=".62"/>
      <rect x="9" y="10" width="884" height="710" fill="none" stroke="#8fadba" stroke-width="2"/>
    </svg>
  </div>
</main>

<footer class="statusbar">
  <label class="search"><svg><use href="#find"/></svg><input placeholder="搜索 (Ctrl+K)" aria-label="搜索"></label>
  <label for="xy">坐标</label><input id="xy" class="xy" value="14490642, 3516745">
  <button aria-label="切换范围"><svg><use href="#extent"/></svg></button>
  <label for="scale">比例</label><div class="combo scale"><select id="scale"><option>1:307608</option></select><svg><use href="#tri"/></svg></div>
  <button class="lock" aria-label="锁定比例"><svg><use href="#lock"/></svg></button>
  <label for="mag">放大镜</label><div class="spin"><input id="mag" value="100%"><span class="updown"><button aria-label="放大倍数增加"><svg><use href="#triup"/></svg></button><button aria-label="放大倍数减少"><svg><use href="#tri"/></svg></button></span></div>
  <label for="rot" class="rotlabel">旋转角度</label><div class="spin"><input id="rot" value="0.0°"><span class="updown"><button aria-label="角度增加"><svg><use href="#triup"/></svg></button><button aria-label="角度减少"><svg><use href="#tri"/></svg></button></span></div>
  <label class="render"><input type="checkbox" checked>渲染</label>
  <button class="epsg"><svg><use href="#crs"/></svg>EPSG:3857</button>
  <button class="msg" aria-label="消息"><svg><use href="#msg"/></svg></button>
</footer>
<div class="edge"><i></i></div>
</body>
</html>
```

FILE: styles.css
```css
* { box-sizing: border-box; }
body {
  margin: 0;
  height: 100vh;
  display: flex;
  flex-direction: column;
  overflow: hidden;
  background: #f0f0f0;
  color: #1c1c1c;
  font: 7px/10px Roboto, "Noto Sans CJK SC", sans-serif;
}
button, input, select { font: inherit; color: inherit; }
button { border: 0; padding: 0; background: none; display: flex; align-items: center; justify-content: center; flex: none; }
svg { flex: none; width: 9px; height: 9px; display: block; }
.sprite { position: absolute; width: 0; height: 0; }
h1, h2 { margin: 0; font-weight: 400; }
h1 { font-size: 7px; }
h2, .cn { font-size: 6px; }
ul { margin: 0; padding: 0; list-style: none; }

.titlebar { display: flex; align-items: center; height: 12px; background: #fff; padding-left: 1px; gap: 2px; flex: none; }
.titlebar h1 { color: #000; }
.winbtns { margin-left: auto; display: flex; }
.winbtns button { width: 24px; height: 12px; }
.winbtns svg { width: 7px; height: 7px; }

.menubar { display: flex; gap: 5px; height: 11px; padding-left: 5px; flex: none; }
.menubar button { white-space: nowrap; }

.toolbar {
  display: flex;
  align-items: center;
  height: 21px;
  flex: none;
  background: linear-gradient(#fcfcfc, #f1f1f1);
  border-bottom: 1px solid #d2d2d2;
}
.toolbar.lower { height: 20px; }
.group { display: flex; align-items: center; justify-content: space-between; flex: none; }
.group > button { width: 17px; height: 17px; }
.group > button svg { width: 12px; height: 12px; }
.group > .drop, .docktools > .drop { width: 6px; }
.group > .drop svg, .docktools > .drop svg { width: 4px; height: 4px; }
.group > button:disabled svg { opacity: .35; filter: grayscale(1); }
.group > .active { background: #dedede; border: 1px solid #bdbdbd; border-radius: 1px; }
.grip { width: 4px; height: 12px; margin: 0 1px 0 3px; flex: none; background: radial-gradient(circle at 1px 1px, #ddd 1px, transparent 1px) 0 0 / 2px 3px; }
.grip:first-child { margin-left: 1px; }
.grip.wide { margin-left: 4px; }
.grip.far { margin-left: 12px; }
.project { width: 104px; }
.navigate { width: 276px; }
.sources { width: 121px; }
.edit { width: 237px; }

.spin, .combo { display: flex; align-items: center; height: 11px; background: #fff; border: 1px solid #c3c3c3; border-radius: 1px; width: 46px; flex: none; }
.spin input { flex: 1; min-width: 0; border: 0; padding: 0 2px; background: none; height: 9px; }
.updown { display: flex; flex-direction: column; width: 7px; border-left: 1px solid #ccc; height: 9px; background: #f4f4f4; flex: none; }
.updown button { flex: 1; }
.updown svg { width: 3px; height: 3px; }
.combo select { flex: 1; min-width: 0; appearance: none; border: 0; padding: 0 2px; background: none; height: 9px; line-height: 9px; opacity: 1; }
.combo svg { width: 4px; height: 4px; margin-right: 3px; }
.tol, .unit { background: #f2f2f2; color: #777; height: 12px; font-size: 7px; }
.tol { margin: 0 1px; }
.unit { width: 34px; font-size: 6px; }
.unit svg { opacity: .5; }

.workspace { flex: 1; min-height: 0; display: flex; gap: 3px; }
.docks { width: 132px; flex: none; display: flex; flex-direction: column; gap: 3px; }
.dock { display: flex; flex-direction: column; }
.dock.grow { flex: 1; min-height: 0; }
.dock header { display: flex; align-items: center; height: 10px; padding: 0 1px 0 2px; gap: 1px; }
.dock h2 { margin-right: auto; }
.dock header svg { width: 7px; height: 7px; }
.docktools { display: flex; align-items: center; height: 15px; padding-left: 2px; }
.docktools button { width: 13px; height: 13px; }
.treebox { display: flex; background: #fff; border: 1px solid #c4c4c4; border-left-color: #ddd; height: 182px; }
.tree { flex: 1; min-width: 0; overflow: hidden; }
.tree li { display: flex; align-items: center; gap: 3px; height: 10px; padding-left: 9px; white-space: nowrap; }
.tree .parent { padding-left: 1px; }
.tree .parent .twist { margin-right: -1px; }
.tree .child { padding-left: 17px; width: 101px; }
.tree .selected { background: #eee; }
.twist { width: 6px; height: 4px; }
.scroll { width: 8px; background: #f0f0f0; display: flex; flex-direction: column; flex: none; }
.scroll button { height: 8px; }
.scroll svg { width: 4px; height: 4px; }
.thumb { height: 41px; background: #ddd; border: 1px solid #c8c8c8; }
.thumb + button { margin-top: auto; }

.layers { flex: 1; min-height: 0; background: #fff; border: 1px solid #c4c4c4; border-left-color: #ddd; overflow: hidden; }
.layer { display: flex; align-items: center; height: 10px; padding: 0 6px 0 2px; gap: 3px; }
.layer label, .legend label { display: flex; align-items: center; gap: 3px; white-space: nowrap; }
.layer label svg { width: 8px; height: 8px; }
.layer em { color: #777; }
.layer b { font-weight: 700; color: #111; }
.layer.current { background: #f0f0f0; }
.layer .chip { margin-left: auto; width: 8px; height: 8px; }
.legend { padding: 1px 0 1px 22px; }
.legend label { height: 10px; gap: 2px; }
.sw { width: 10px; height: 10px; border: 1px solid #777; flex: none; }
.legend .sw { margin-right: 1px; }
.c1 { background: #2b83ba; }
.c2 { background: #abdda4; }
.c3 { background: #ffffbf; }
.c4 { background: #fdae61; }
.c5 { background: #d7191c; }
.sky { background: #a6dcf4; width: 8px; height: 8px; border-color: #8cbdd2; }
input[type="checkbox"] { appearance: none; margin: 0; width: 8px; height: 8px; border: 1px solid #d0d0d0; background: #fff; display: flex; align-items: center; justify-content: center; flex: none; }
input[type="checkbox"]:checked::after { content: ""; width: 3px; height: 5px; border: solid #111; border-width: 0 1px 1px 0; transform: rotate(40deg); }
.band { height: 9px; line-height: 9px; padding-left: 22px; }
.ramp { display: flex; gap: 3px; height: 51px; padding-left: 22px; font: 6px/8px "Liberation Sans", sans-serif; }
.ramp i { width: 8px; background: linear-gradient(#fff, #000); }
.ramp div { display: flex; flex-direction: column; justify-content: space-between; }

.canvas { flex: 1; min-width: 0; position: relative; background: #fff; border: 1px solid #c0c0c0; border-right: 0; }
.map { position: absolute; left: 35.500%; top: 29.500%; width: 295px; height: 237px; }

.statusbar { height: 15px; flex: none; display: flex; align-items: center; gap: 2px; padding: 0 3px; font: 6px/9px "Liberation Sans", "Noto Sans CJK SC", sans-serif; }
.statusbar label { white-space: nowrap; }
.search { display: flex; align-items: center; gap: 4px; width: 104px; height: 11px; border: 1px solid #c3c3c3; background: #fff; padding-left: 3px; margin-right: auto; }
.search svg { width: 7px; height: 7px; }
.search input { border: 0; padding: 0; flex: 1; min-width: 0; height: 9px; background: none; }
.search input::placeholder { color: #777; }
.xy { width: 60px; height: 11px; border: 1px solid #c3c3c3; padding: 0 2px; background: #fff; }
.statusbar button svg { width: 9px; height: 9px; }
.statusbar .updown svg { width: 3px; height: 3px; }
.scale { width: 43px; margin-right: 3px; }
.statusbar > button + label { margin-left: 2px; }
.rotlabel { margin-left: 4px; }
.render { display: flex; align-items: center; gap: 3px; margin-left: 1px; }
.epsg { gap: 2px; margin-left: 2px; }
.msg { margin-left: 9px; }
.edge { height: 1px; flex: none; background: #1b1b1b; }
.edge i { display: block; width: 150px; height: 1px; margin-left: 25px; background: #ddd; }
```
